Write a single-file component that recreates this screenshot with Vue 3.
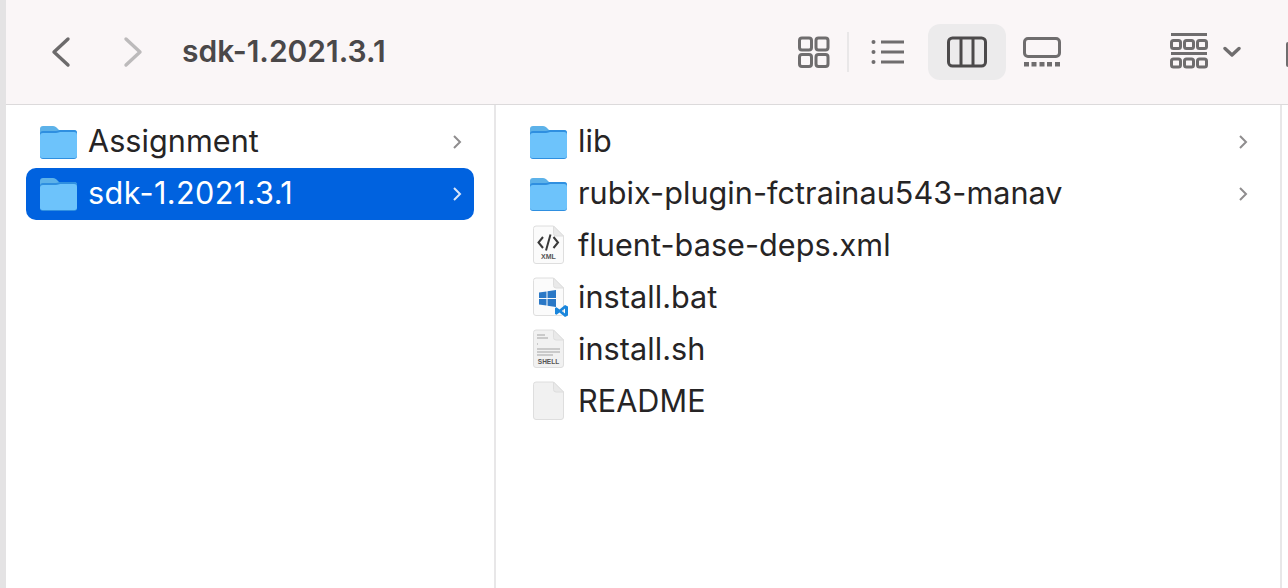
<script setup>
const leftRows = [
  { name: 'Assignment', selected: false },
  { name: 'sdk-1.2021.3.1', selected: true },
]
const rightRows = [
  { name: 'lib', icon: 'folder', more: true },
  { name: 'rubix-plugin-fctrainau543-manav', icon: 'folder', more: true },
  { name: 'fluent-base-deps.xml', icon: 'xml' },
  { name: 'install.bat', icon: 'bat' },
  { name: 'install.sh', icon: 'sh' },
  { name: 'README', icon: 'doc' },
]
</script>

<template>
  <div class="window">
    <div class="strip"></div>
    <div class="main">
      <header class="toolbar">
        <svg class="nav back" width="24" height="32" viewBox="0 0 24 32"><path d="M19 3 L5 16 L19 29" /></svg>
        <svg class="nav fwd" width="24" height="32" viewBox="0 0 24 32"><path d="M5 3 L19 16 L5 29" /></svg>
        <h1 class="title">sdk-1.2021.3.1</h1>
        <div class="views">
          <svg class="ic grid" width="32" height="32" viewBox="0 0 32 32">
            <rect x="1.500" y="2" width="12" height="12" rx="2.500" /><rect x="18" y="2" width="12" height="12" rx="2.500" />
            <rect x="1.500" y="18.500" width="12" height="12" rx="2.500" /><rect x="18" y="18.500" width="12" height="12" rx="2.500" />
          </svg>
          <span class="sep"></span>
          <svg class="ic list" width="34" height="26" viewBox="0 0 34 26">
            <circle cx="2.500" cy="3" r="2" /><circle cx="2.500" cy="13" r="2" /><circle cx="2.500" cy="23" r="2" />
            <path d="M10 3H33M10 13H33M10 23H33" />
          </svg>
          <div class="active">
            <svg class="ic cols" width="40" height="32" viewBox="0 0 40 32">
              <rect x="1.500" y="2" width="37" height="28" rx="4" /><path d="M14 2V30M26 2V30" />
            </svg>
          </div>
          <svg class="ic gallery" width="38" height="30" viewBox="0 0 38 30">
            <rect x="1.500" y="1.500" width="35" height="18" rx="3.500" />
            <g class="dots"><rect x="1" y="25" width="5" height="4.500" /><rect x="8.500" y="25" width="5" height="4.500" /><rect x="16.500" y="25" width="5" height="4.500" /><rect x="24" y="25" width="5" height="4.500" /><rect x="32" y="25" width="5" height="4.500" /></g>
          </svg>
        </div>
        <svg class="ic group" width="38" height="36" viewBox="0 0 38 36">
          <path d="M1 1.500H37M1 20.500H37" />
          <rect x="1.500" y="7.500" width="9" height="8" rx="2" /><rect x="14.500" y="7.500" width="9" height="8" rx="2" /><rect x="27.500" y="7.500" width="9" height="8" rx="2" />
          <rect x="1.500" y="26" width="9" height="8" rx="2" /><rect x="14.500" y="26" width="9" height="8" rx="2" /><rect x="27.500" y="26" width="9" height="8" rx="2" />
        </svg>
        <svg class="chev" width="18" height="12" viewBox="0 0 18 12"><path d="M2 2.500 L9 9 L16 2.500" /></svg>
        <span class="edge"></span>
      </header>

      <div class="columns">
        <section class="col first">
          <div v-for="r in leftRows" :key="r.name" class="row" :class="{ selected: r.selected }">
            <svg class="file" width="40" height="36" viewBox="0 0 40 36">
              <path class="f-tab" d="M1 6a3 3 0 0 1 3-3h10c2 0 3 1 4 2l2 2h15a3 3 0 0 1 3 3v4H1z" />
              <path class="f-line" d="M1 11a3 3 0 0 1 3-3h13c2 0 3-1 4-1h14a3 3 0 0 1 3 3v23a3 3 0 0 1-3 3H4a3 3 0 0 1-3-3z" />
              <path class="f-body" d="M1 13a3 3 0 0 1 3-3h13c2 0 3-1 4-1h14a3 3 0 0 1 3 3v20.500a2.500 2.500 0 0 1-2.500 2.500H3.500A2.500 2.500 0 0 1 1 32.500z" />
            </svg>
            <span class="name">{{ r.name }}</span>
            <svg class="more" width="10" height="16" viewBox="0 0 10 16"><path d="M2 2 L8 8 L2 14" /></svg>
          </div>
        </section>
        <section class="col second">
          <div v-for="r in rightRows" :key="r.name" class="row">
            <svg v-if="r.icon === 'folder'" class="file" width="40" height="36" viewBox="0 0 40 36">
              <path class="f-tab" d="M1 6a3 3 0 0 1 3-3h10c2 0 3 1 4 2l2 2h15a3 3 0 0 1 3 3v4H1z" />
              <path class="f-line" d="M1 11a3 3 0 0 1 3-3h13c2 0 3-1 4-1h14a3 3 0 0 1 3 3v23a3 3 0 0 1-3 3H4a3 3 0 0 1-3-3z" />
              <path class="f-body" d="M1 13a3 3 0 0 1 3-3h13c2 0 3-1 4-1h14a3 3 0 0 1 3 3v20.500a2.500 2.500 0 0 1-2.500 2.500H3.500A2.500 2.500 0 0 1 1 32.500z" />
            </svg>
            <svg v-else class="file" width="40" height="40" viewBox="0 0 40 40">
              <path class="page" :class="{ grey: r.icon === 'sh' || r.icon === 'doc' }" d="M7 1H24.500L34.500 11V36a2.500 2.500 0 0 1-2.500 2.500H7A2.500 2.500 0 0 1 4.500 36V3.500A2.500 2.500 0 0 1 7 1Z" />
              <path class="fold" d="M24.500 1V8.500A2.500 2.500 0 0 0 27 11H34.500Z" />
              <template v-if="r.icon === 'xml'">
                <path class="code" d="M14 12 L9.500 17.500 L14 23 M24.500 12 L29 17.500 L24.500 23 M21.500 9.500 L17 25.500" />
                <text class="tag xml" x="19.500" y="34">XML</text>
              </template>
              <template v-else-if="r.icon === 'bat'">
                <path class="win" d="M10 15.500 L17.500 14.500V21H10ZM18.500 14.300 L27 13V21H18.500ZM10 22H17.500V28.500L10 27.500ZM18.500 22H27V30L18.500 28.700Z" />
                <path class="vsc" d="M36 28 L39 29.500 V38.500 L36 40 L30.500 35.500 L27.500 37.800 L26 37 V31 L27.500 30.200 L30.500 32.500 Z M36 31.500 L32.800 34 L36 36.500 Z" />
              </template>
              <template v-else-if="r.icon === 'sh'">
                <path class="lines" d="M8 6H16M8 9H19M8 15H9M8 20H31M8 23H31M8 26H24" />
                <text class="tag shell" x="19.500" y="34.500">SHELL</text>
              </template>
            </svg>
            <span class="name">{{ r.name }}</span>
            <svg v-if="r.more" class="more" width="10" height="16" viewBox="0 0 10 16"><path d="M2 2 L8 8 L2 14" /></svg>
          </div>
        </section>
        <span class="col-end"></span>
      </div>
    </div>
  </div>
</template>

<style>
html, body { margin: 0; background: #fff; }
</style>

<style scoped>
.window {
  display: flex;
  width: 1288px;
  height: 588px;
  overflow: hidden;
  font-family: Inter, "Liberation Sans", sans-serif;
  background: #fff;
}
.strip { width: 6px; background: #e4e3e4; flex: none; }
.main { flex: 1; display: flex; flex-direction: column; min-width: 0; position: relative; }
.toolbar {
  height: 105px;
  box-sizing: border-box;
  background: #faf6f7;
  border-bottom: 1px solid #dcdadb;
  display: flex;
  align-items: center;
  padding-left: 43px;
  position: relative;
  flex: none;
}
.nav { flex: none; fill: none; stroke-width: 3.4; stroke-linecap: round; stroke-linejoin: round; }
.back { stroke: #6c6a6b; }
.fwd { stroke: #bcbabb; margin-left: 48px; }
.title {
  margin: 0 0 0 37px;
  font-size: 30px;
  font-weight: 600;
  color: #4a4849;
  letter-spacing: 0;
  white-space: nowrap;
  position: relative;
  top: -1px;
}
.views { display: flex; align-items: center; margin-left: 412px; }
.ic { flex: none; fill: none; stroke: #6f6d6e; stroke-width: 3; }
.sep { width: 2px; height: 40px; background: #e9e7e8; margin: 0 0 0 17px; }
.list { margin-left: 22px; }
.list circle { fill: #6f6d6e; stroke: none; }
.active {
  width: 78px;
  height: 56px;
  border-radius: 12px;
  background: #ecebec;
  margin-left: 23px;
  display: flex;
  align-items: center;
  justify-content: center;
}
.cols { stroke: #4c4a4b; }
.gallery { margin-left: 17px; }
.dots rect { fill: #6f6d6e; stroke: none; }
.group { margin-left: 109px; position: relative; top: -1px; }
.chev { flex: none; fill: none; stroke: #6f6d6e; stroke-width: 3.4; stroke-linecap: round; stroke-linejoin: round; margin-left: 15px; }
.edge {
  position: absolute;
  left: 1280px;
  top: 42px;
  width: 2px;
  height: 25px;
  background: #6f6d6e;
  border-radius: 2px 0 0 2px;
}
.columns { flex: 1; display: flex; position: relative; }
.col { padding-top: 11px; box-sizing: border-box; }
.first { width: 490px; border-right: 2px solid #e8e7e8; flex: none; padding-left: 20px; padding-right: 20px; }
.second { flex: 1; padding-left: 29px; padding-right: 40px; }
.col-end { position: absolute; left: 1274px; top: 0; bottom: 0; width: 2px; background: #e8e7e8; }
.row {
  height: 52px;
  display: flex;
  align-items: center;
  border-radius: 10px;
  padding-left: 13px;
  padding-right: 12px;
  color: #262425;
}
.second .row { padding-left: 4px; padding-right: 0; }
.selected { background: #0062df; color: #fff; }
.file { flex: none; position: relative; top: -1px; }
.name { margin-left: 9px; font-size: 30.6px; letter-spacing: 0.05px; white-space: nowrap; flex: 1; position: relative; top: -2px; }
.selected .name { letter-spacing: 0.4px; }
.more { flex: none; fill: none; stroke: #8f8d8e; stroke-width: 2; }
.selected .more { stroke: #d8e6fa; }
.f-tab { fill: #5db2e9; }
.f-line { fill: #2f8fe0; }
.f-body { fill: #6dc3fb; }
.page { fill: #fbfbfb; stroke: #dedede; stroke-width: 1; }
.page.grey { fill: #f1f1f1; }
.fold { fill: #e9e9e9; stroke: #dedede; stroke-width: 1; }
.code { fill: none; stroke: #3a3a3a; stroke-width: 2; }
.tag { font-family: "Liberation Sans", sans-serif; font-weight: 700; text-anchor: middle; fill: #555; }
.xml { font-size: 7px; }
.shell { font-size: 6.5px; }
.win { fill: #2a78c6; }
.vsc { fill: #1a86dc; fill-rule: evenodd; }
.lines { fill: none; stroke: #bdbdbd; stroke-width: 1.5; }
</style>
